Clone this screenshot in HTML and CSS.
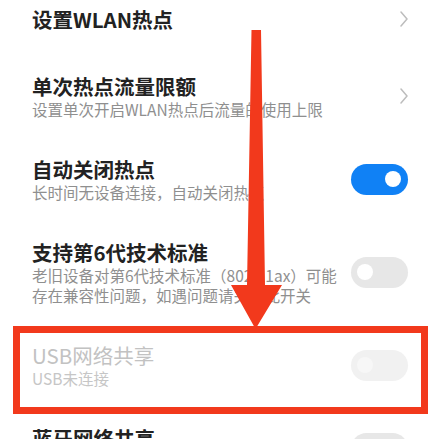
FILE: index.html
```html
<!DOCTYPE html>
<html lang="zh-CN">
<head>
<meta charset="utf-8">
<title>热点设置</title>
<link rel="stylesheet" href="styles.css">
</head>
<body>
<div class="screen">
  <div class="list">
    <div class="row row-first">
      <div class="text"><div class="title">设置WLAN热点</div></div>
      <svg class="chevron" viewBox="0 0 8 16" width="8" height="16"><path d="M1 1 L7 8 L1 15" fill="none" stroke="#bdbdbd" stroke-width="1.5" stroke-linecap="round" stroke-linejoin="round"/></svg>
    </div>
    <div class="row">
      <div class="text">
        <div class="title">单次热点流量限额</div>
        <div class="sub">设置单次开启WLAN热点后流量的使用上限</div>
      </div>
      <svg class="chevron" viewBox="0 0 8 16" width="8" height="16"><path d="M1 1 L7 8 L1 15" fill="none" stroke="#bdbdbd" stroke-width="1.5" stroke-linecap="round" stroke-linejoin="round"/></svg>
    </div>
    <div class="row">
      <div class="text">
        <div class="title">自动关闭热点</div>
        <div class="sub">长时间无设备连接，自动关闭热点</div>
      </div>
      <div class="switch on"><span class="knob"></span></div>
    </div>
    <div class="row">
      <div class="text">
        <div class="title">支持第6代技术标准</div>
        <div class="sub">老旧设备对第6代技术标准（802.11ax）可能<br>存在兼容性问题，如遇问题请关闭此开关</div>
      </div>
      <div class="switch"><span class="knob"></span></div>
    </div>
    <div class="row disabled">
      <div class="text">
        <div class="title">USB网络共享</div>
        <div class="sub">USB未连接</div>
      </div>
      <div class="switch"><span class="knob"></span></div>
    </div>
    <div class="row">
      <div class="text">
        <div class="title">蓝牙网络共享</div>
        <div class="sub">未开启</div>
      </div>
      <div class="switch"><span class="knob"></span></div>
    </div>
  </div>
  <div class="highlight"></div>
  <svg class="arrow" viewBox="0 0 443 439" width="443" height="439">
    <polygon points="251.5,30 261,30 265,285 282,285 255.5,329 231,285 247,285" fill="#f2391c"/>
  </svg>
</div>
</body>
</html>
```
FILE: styles.css
```css
html, body {
  margin: 0;
  padding: 0;
  background: #ffffff;
}
body {
  font-family: "Noto Sans CJK SC", "Noto Sans", sans-serif;
}
.screen {
  position: relative;
  width: 443px;
  height: 439px;
  overflow: hidden;
  background: #ffffff;
}
.list {
  margin-top: -16.5px;
}
.row {
  display: flex;
  align-items: center;
  padding: 18.5px 35px 18.5px 32px;
}
.row-first {
  padding-top: 22.5px;
  padding-bottom: 22.5px;
}
.text {
  flex: 1;
  min-width: 0;
}
.title {
  font-size: 20.5px;
  line-height: 26px;
  font-weight: 700;
  color: #222222;
  white-space: nowrap;
}
.sub {
  font-size: 15.5px;
  line-height: 20px;
  color: #8f8f8f;
  white-space: nowrap;
}
.disabled .title {
  color: #c2c2c2;
  font-weight: 400;
}
.disabled .sub {
  color: #c6c6c6;
}
.chevron {
  flex: none;
  display: block;
}
.switch {
  flex: none;
  width: 57px;
  height: 31px;
  border-radius: 15.5px;
  background: #e7e7e7;
  display: flex;
  align-items: center;
  padding: 0 6px;
  box-sizing: border-box;
}
.switch .knob {
  width: 16px;
  height: 16px;
  border-radius: 50%;
  background: #ffffff;
}
.switch.on {
  background: #1081f5;
  justify-content: flex-end;
  padding: 0 7px;
}
.disabled .switch {
  background: #f1f1f1;
}
.disabled .switch .knob {
  background: #f7f7f7;
}
.highlight {
  position: absolute;
  left: 13px;
  top: 326px;
  width: 415px;
  height: 88px;
  box-sizing: border-box;
  border: 7px solid #f2391c;
}
.arrow {
  position: absolute;
  left: 0;
  top: 0;
  display: block;
}
```
